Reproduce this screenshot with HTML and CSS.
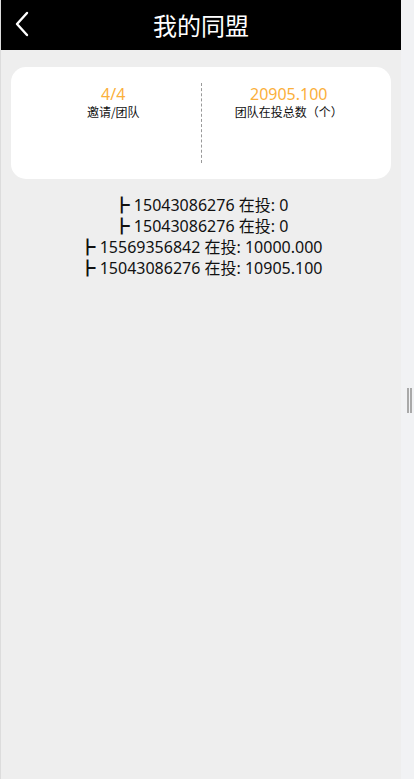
FILE: index.html
```html
<!DOCTYPE html>
<html lang="zh-CN">
<head>
<meta charset="utf-8">
<title>我的同盟</title>
<link rel="stylesheet" href="styles.css">
</head>
<body>
<div class="frame">
  <div class="page">
    <header class="topbar">
      <a class="back" href="#" aria-label="返回">
        <svg width="16" height="26" viewBox="0 0 16 26"><path d="M13 2 L3 13 L13 24" fill="none" stroke="#fff" stroke-width="2.4" stroke-linecap="round" stroke-linejoin="round"/></svg>
      </a>
      <h1 class="title">我的同盟</h1>
      <span class="spacer"></span>
    </header>
    <section class="card">
      <div class="stat">
        <div class="num">4/4</div>
        <div class="label">邀请/团队</div>
      </div>
      <div class="divider"></div>
      <div class="stat">
        <div class="num">20905.100</div>
        <div class="label">团队在投总数（个）</div>
      </div>
    </section>
    <ul class="tree">
      <li>┣ 15043086276 在投: 0</li>
      <li>┣ 15043086276 在投: 0</li>
      <li>┣ 15569356842 在投: 10000.000</li>
      <li>┣ 15043086276 在投: 10905.100</li>
    </ul>
  </div>
  <aside class="gutter"><span class="handle"></span></aside>
</div>
</body>
</html>
```
FILE: styles.css
```css
html, body {
  margin: 0;
  padding: 0;
  height: 100%;
}
body {
  font-family: "Noto Sans", "Noto Sans CJK SC", sans-serif;
  background: #f1f2f4;
}
.frame {
  display: flex;
  height: 779px;
}
.page {
  width: 400px;
  border-left: 1px solid #dcdcdc;
  background: #eeeeee;
  display: flex;
  flex-direction: column;
}
.gutter {
  flex: 1;
  background: #f1f2f4;
  display: flex;
  align-items: center;
  justify-content: flex-end;
  padding-right: 2px;
}
.handle {
  width: 5px;
  height: 25px;
  border-left: 2px solid #a9a9a9;
  border-right: 2px solid #a9a9a9;
  box-sizing: border-box;
  margin-top: 22px;
}
.topbar {
  height: 50px;
  background: #000;
  display: grid;
  grid-template-columns: 40px 1fr 40px;
  align-items: center;
}
.back {
  display: flex;
  justify-content: center;
  padding-left: 2px;
  padding-bottom: 3px;
}
.title {
  margin: 0;
  text-align: center;
  color: #fff;
  font-family: "Noto Sans CJK SC", sans-serif;
  font-size: 24px;
  font-weight: 400;
  line-height: 50px;
}
.card {
  margin: 17px 10px 0 10px;
  height: 112px;
  background: #fff;
  border-radius: 15px;
  display: flex;
  padding: 16px 15px 0 15px;
  box-sizing: border-box;
}
.stat {
  flex: 1;
  text-align: center;
}
.num {
  color: #fbb03b;
  font-size: 16px;
  line-height: 20px;
  margin-top: 1px;
}
.label {
  color: #111;
  font-family: "Noto Sans CJK SC", sans-serif;
  font-size: 12px;
  line-height: 16px;
}
.divider {
  width: 0;
  height: 80px;
  border-left: 1px dashed #999;
}
.tree {
  list-style: none;
  margin: 16px 0 0 0;
  padding: 0;
  text-align: center;
  font-size: 16px;
  line-height: 21px;
  color: #111;
}
```
